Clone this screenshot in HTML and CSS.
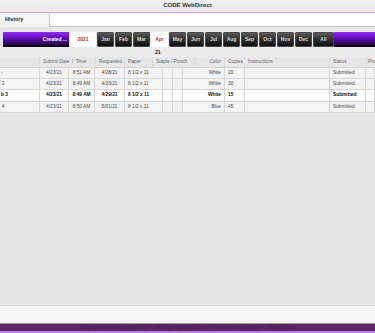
FILE: index.html
```html
<!DOCTYPE html>
<html>
<head>
<meta charset="utf-8">
<link rel="stylesheet" href="styles.css">
</head>
<body>
<div class="app">
  <div class="titlebar">CODE WebDirect</div>
  <div class="tabs">
    <div class="tab">History</div>
    <div class="tabfill"></div>
  </div>
  <div class="bar">
    <div class="created">Created ...</div>
    <div class="btn year sel">2021</div>
    <div class="btn">Jan</div>
    <div class="btn">Feb</div>
    <div class="btn">Mar</div>
    <div class="btn sel">Apr</div>
    <div class="btn">May</div>
    <div class="btn">Jun</div>
    <div class="btn">Jul</div>
    <div class="btn">Aug</div>
    <div class="btn">Sep</div>
    <div class="btn">Oct</div>
    <div class="btn">Nov</div>
    <div class="btn">Dec</div>
    <div class="btn all">All</div>
    <div class="barfill"></div>
  </div>
  <div class="dayrow"><span class="day">21</span></div>
  <div class="table">
    <div class="thead">
      <div class="th"></div>
      <div class="th">Submit Date &nbsp;/&nbsp; Time</div>
      <div class="th right">Requested</div>
      <div class="th">Paper</div>
      <div class="th">Staple / Punch</div>
      <div class="th right">Color</div>
      <div class="th">Copies</div>
      <div class="th">Instructions</div>
      <div class="th">Status</div>
      <div class="th last">Pro</div>
    </div>
    <div class="row">
      <div class="td name">-</div>
      <div class="td c">4/23/21</div>
      <div class="td c">8:51 AM</div>
      <div class="td c">4/28/21</div>
      <div class="td">8 1/2 x 11</div>
      <div class="td"></div>
      <div class="td"></div>
      <div class="td right">White</div>
      <div class="td">20</div>
      <div class="td"></div>
      <div class="td">Submitted</div>
      <div class="td"></div>
    </div>
    <div class="row">
      <div class="td name">&#8202;&#8202;2</div>
      <div class="td c">4/23/21</div>
      <div class="td c">8:49 AM</div>
      <div class="td c">4/26/21</div>
      <div class="td">8 1/2 x 11</div>
      <div class="td"></div>
      <div class="td"></div>
      <div class="td right">White</div>
      <div class="td">30</div>
      <div class="td"></div>
      <div class="td">Submitted</div>
      <div class="td"></div>
    </div>
    <div class="row selrow">
      <div class="td name">b 3</div>
      <div class="td c">4/23/21</div>
      <div class="td c">8:49 AM</div>
      <div class="td c">4/29/21</div>
      <div class="td">8 1/2 x 11</div>
      <div class="td"></div>
      <div class="td"></div>
      <div class="td right">White</div>
      <div class="td">15</div>
      <div class="td"></div>
      <div class="td">Submitted</div>
      <div class="td"></div>
    </div>
    <div class="row">
      <div class="td name">&#8202;&#8202;4</div>
      <div class="td c">4/23/21</div>
      <div class="td c">8:50 AM</div>
      <div class="td c">5/01/21</div>
      <div class="td">8 1/2 x 11</div>
      <div class="td"></div>
      <div class="td"></div>
      <div class="td right">Blue</div>
      <div class="td">45</div>
      <div class="td"></div>
      <div class="td">Submitted</div>
      <div class="td"></div>
    </div>
  </div>
  <div class="empty"></div>
  <div class="lower"></div>
  <div class="footer">Copyright © 2021 Programs101 &nbsp;•&nbsp; admin@programs101.com &nbsp;•&nbsp; Your School District &nbsp;•&nbsp; 555-555-5555</div>
</div>
</body>
</html>
```

FILE: styles.css
```css
html, body {
  margin: 0;
  padding: 0;
}
body {
  width: 375px;
  height: 333px;
  overflow: hidden;
  font-family: "Liberation Sans", Arial, sans-serif;
  background: #e6e6e6;
}
.app {
  display: flex;
  flex-direction: column;
  height: 333px;
  overflow: hidden;
}
.titlebar {
  height: 12px;
  line-height: 11px;
  text-align: center;
  font-size: 6px;
  font-weight: bold;
  color: #333;
  background: linear-gradient(#f1f1f1, #e8e8e8);
  border-bottom: 1px solid #cda8ee;
  flex: none;
}
.tabs {
  display: flex;
  height: 14px;
  flex: none;
  background: #f0f0f0;
}
.tab {
  width: 50px;
  box-sizing: border-box;
  background: #f3f3f3;
  border-right: 1px solid #c8c8c8;
  border-top-right-radius: 2px;
  font-size: 5.3px;
  font-weight: bold;
  color: #222;
  padding-left: 5px;
  line-height: 13px;
}
.tabfill {
  flex: 1;
  background: #fff;
  border-bottom: 1px solid #c6c6c6;
  margin-top: 1px;
}
.bar {
  display: flex;
  gap: 1px;
  height: 15px;
  margin-top: 5px;
  margin-left: 3px;
  flex: none;
  font-size: 5px;
  font-weight: bold;
}
.created, .barfill {
  background: linear-gradient(#8f2cf0 0%, #6c0fc4 35%, #3a0670 70%, #050008 100%);
}
.created {
  width: 66px;
  flex: none;
  color: #fff;
  text-align: right;
  padding-right: 2px;
  box-sizing: border-box;
  line-height: 15px;
}
.barfill {
  flex: 1;
  margin-left: -1px;
}
.btn {
  width: 17px;
  flex: none;
  box-sizing: border-box;
  border: 1px solid #4a4a4a;
  border-radius: 1px;
  background: linear-gradient(#5a5a5a, #2e2e2e 50%, #101010);
  color: #d8d8d8;
  text-align: center;
  line-height: 13px;
}
.btn.year {
  width: 26px;
}
.btn.all {
  width: 21px;
}
.btn.sel {
  background: #fff;
  border-color: #fff;
  color: #c4302b;
}
.dayrow {
  height: 10px;
  flex: none;
  padding-left: 155px;
  font-size: 5px;
  font-weight: bold;
  color: #222;
  line-height: 10px;
  background: #ececec;
}
.table {
  flex: none;
  font-size: 4.8px;
  color: #444;
}
.thead, .row {
  display: grid;
  width: 375px;
  overflow: hidden;
}
.thead {
  grid-template-columns: 40px 56px 29px 28px 42px 30px 20px 85px 37px 8px;
  height: 10.5px;
  background: #e7e7e7;
  border-bottom: 1px solid #d2d2d2;
  box-sizing: border-box;
  color: #666;
}
.row {
  grid-template-columns: 40px 29px 26px 30px 38px 10px 10px 42px 20px 85px 36px 9px;
  height: 11.4px;
  box-sizing: border-box;
  background: #f3f3f3;
  border-bottom: 1px solid #d6d6d6;
}
.th, .td {
  border-right: 1px solid #d6d6d6;
  padding: 0 3px;
  white-space: nowrap;
  overflow: hidden;
}
.th {
  line-height: 9.5px;
  border-right-color: #dcdcdc;
}
.th.last {
  padding: 0 0 0 1px;
  border-right: none;
}
.td {
  line-height: 10.4px;
}
.td.name {
  padding-left: 1px;
}
.c {
  text-align: center;
  padding: 0;
}
.right {
  text-align: right;
}
.selrow {
  background: #fff;
  font-weight: bold;
  color: #111;
}
.empty {
  flex: 1;
  background: #e6e6e6;
  border-bottom: 1px solid #d8d8d8;
}
.lower {
  height: 17px;
  flex: none;
  background: #f3f3f3;
  border-bottom: 1px solid #9a9a9a;
}
.footer {
  height: 7px;
  flex: none;
  background: #5e2568;
  border-bottom: 2px solid #b57fe3;
  color: #43224b;
  font-size: 4.8px;
  line-height: 7px;
  text-align: center;
  white-space: nowrap;
}
```
